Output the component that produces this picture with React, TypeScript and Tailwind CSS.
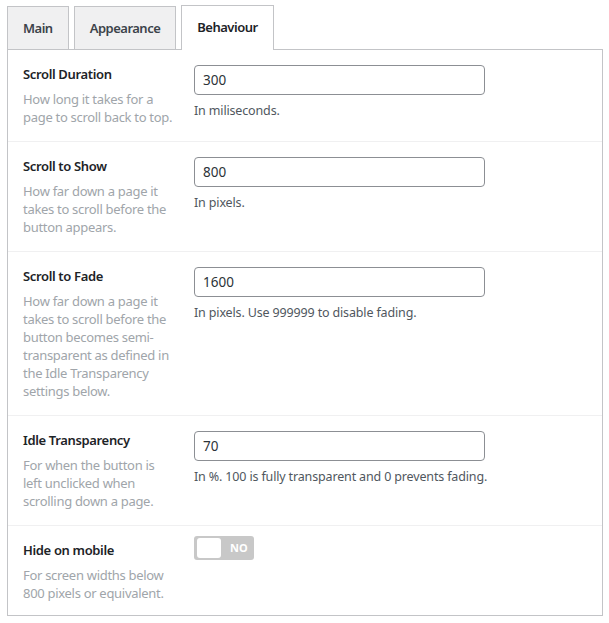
import React from "react";

const font = { fontFamily: '"Noto Sans", "Open Sans", sans-serif' };

type Row = {
  label: string;
  desc: string[];
  value?: string;
  help?: string;
  toggle?: boolean;
};

const rows: Row[] = [
  {
    label: "Scroll Duration",
    desc: ["How long it takes for a", "page to scroll back to top."],
    value: "300",
    help: "In miliseconds.",
  },
  {
    label: "Scroll to Show",
    desc: ["How far down a page it", "takes to scroll before the", "button appears."],
    value: "800",
    help: "In pixels.",
  },
  {
    label: "Scroll to Fade",
    desc: [
      "How far down a page it",
      "takes to scroll before the",
      "button becomes semi-",
      "transparent as defined in",
      "the Idle Transparency",
      "settings below.",
    ],
    value: "1600",
    help: "In pixels. Use 999999 to disable fading.",
  },
  {
    label: "Idle Transparency",
    desc: ["For when the button is", "left unclicked when", "scrolling down a page."],
    value: "70",
    help: "In %. 100 is fully transparent and 0 prevents fading.",
  },
  {
    label: "Hide on mobile",
    desc: ["For screen widths below", "800 pixels or equivalent."],
    toggle: true,
  },
];

export default function App() {
  return (
    <div className="bg-white w-[609px] h-[623px] pt-[5px] pl-[7px]" style={font}>
      <div className="w-[596px]">
        <div className="flex items-end gap-[5px] h-[44px]">
          <div className="h-[43px] pt-px px-[15px] flex items-center bg-[#f0f0f1] border border-b-0 border-[#c3c4c7] text-[13px] tracking-[-0.5px] font-semibold text-[#3c434a]">
            Main
          </div>
          <div className="h-[43px] pt-px px-[15px] flex items-center bg-[#f0f0f1] border border-b-0 border-[#c3c4c7] text-[13px] tracking-[-0.5px] font-semibold text-[#3c434a]">
            Appearance
          </div>
          <div className="relative z-10 h-[45px] -mb-px px-[15px] flex items-center bg-white border border-b-0 border-[#c3c4c7] text-[13px] tracking-[-0.5px] font-semibold text-[#1d2327]">
            Behaviour
          </div>
        </div>
        <div className="border border-[#c3c4c7] bg-white">
          {rows.map((r, i) => (
            <div
              key={r.label}
              className={
                "flex pl-[15px] pt-[15px] " +
                (i < rows.length - 1 ? "pb-[15px] border-b border-[#f0f0f1]" : "pb-[13px]")
              }
            >
              <div className="w-[171px] shrink-0">
                <div className="text-[13px] leading-[19px] tracking-[-0.35px] font-semibold text-[#1d2327]">{r.label}</div>
                <div className="mt-[6px] text-[13px] leading-[18px] tracking-[-0.3px] text-[#a0a5aa]">
                  {r.desc.map((d) => (
                    <div key={d} className="whitespace-nowrap">{d}</div>
                  ))}
                </div>
              </div>
              <div className="flex flex-col">
                {r.toggle ? (
                  <div className="mt-[-5px] w-[60px] h-[24px] rounded-[3px] bg-[#c8c8c8] flex items-center pl-[3px]">
                    <div className="w-[24px] h-[20px] rounded-[3px] bg-white" />
                    <span className="ml-[9px] text-[11px] font-bold text-white">NO</span>
                  </div>
                ) : (
                  <>
                    <div className="w-[291px] h-[30px] border border-[#8c8f94] rounded-[4px] flex items-center px-[8px] text-[13.5px] text-[#2c3338]">
                      {r.value}
                    </div>
                    <div className="mt-[6px] text-[12.5px] leading-[19px] tracking-[-0.15px] text-[#50575e]">{r.help}</div>
                  </>
                )}
              </div>
            </div>
          ))}
        </div>
      </div>
    </div>
  );
}
